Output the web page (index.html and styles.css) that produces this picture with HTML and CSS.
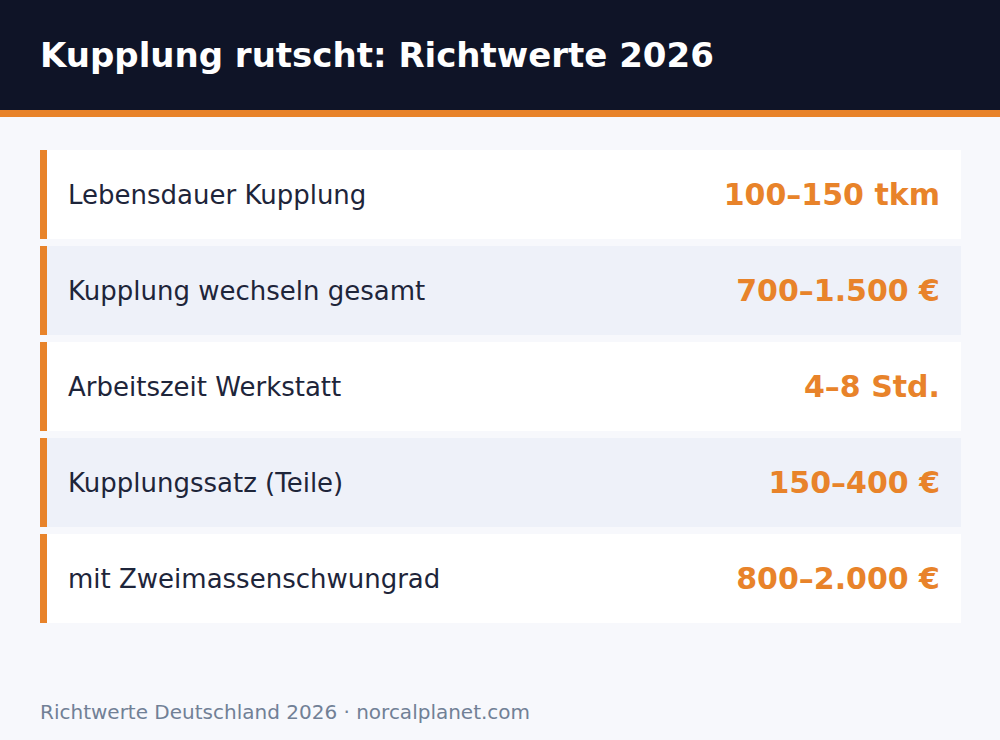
FILE: index.html
```html
<!DOCTYPE html>
<html lang="de">
<head>
<meta charset="utf-8">
<title>Kupplung rutscht: Richtwerte 2026</title>
<link rel="stylesheet" href="styles.css">
</head>
<body>
<header class="header">
  <h1 class="title">Kupplung rutscht: Richtwerte 2026</h1>
</header>
<main class="list">
  <div class="row"><span class="label">Lebensdauer Kupplung</span><span class="value">100–150 tkm</span></div>
  <div class="row alt"><span class="label">Kupplung wechseln gesamt</span><span class="value">700–1.500 €</span></div>
  <div class="row"><span class="label">Arbeitszeit Werkstatt</span><span class="value">4–8 Std.</span></div>
  <div class="row alt"><span class="label">Kupplungssatz (Teile)</span><span class="value">150–400 €</span></div>
  <div class="row"><span class="label">mit Zweimassenschwungrad</span><span class="value">800–2.000 €</span></div>
</main>
<footer class="footer">Richtwerte Deutschland 2026 · norcalplanet.com</footer>
</body>
</html>
```
FILE: styles.css
```css
* { box-sizing: border-box; }
html, body { margin: 0; padding: 0; }
body {
  width: 1000px;
  height: 740px;
  background: #f7f8fc;
  font-family: "DejaVu Sans", sans-serif;
  display: flex;
  flex-direction: column;
  overflow: hidden;
}
.header {
  height: 117px;
  background: #0f1427;
  border-bottom: 7px solid #e8832a;
  display: flex;
  align-items: center;
  padding: 0 40px;
}
.title {
  margin: 0;
  color: #ffffff;
  font-size: 34px;
  font-weight: bold;
  line-height: 1;
}
.list {
  padding: 33px 39px 0 40px;
  display: flex;
  flex-direction: column;
  gap: 7px;
}
.row {
  height: 89px;
  background: #ffffff;
  border-left: 7px solid #e8832a;
  display: flex;
  align-items: center;
  justify-content: space-between;
  padding: 0 21px 0 21px;
}
.row.alt { background: #eef1f9; }
.label {
  font-size: 26px;
  color: #1e253a;
}
.value {
  font-size: 30px;
  font-weight: bold;
  color: #e8832a;
}
.footer {
  margin-top: auto;
  padding: 0 40px 16px;
  font-size: 20px;
  line-height: 1.2;
  color: #718096;
}
```
